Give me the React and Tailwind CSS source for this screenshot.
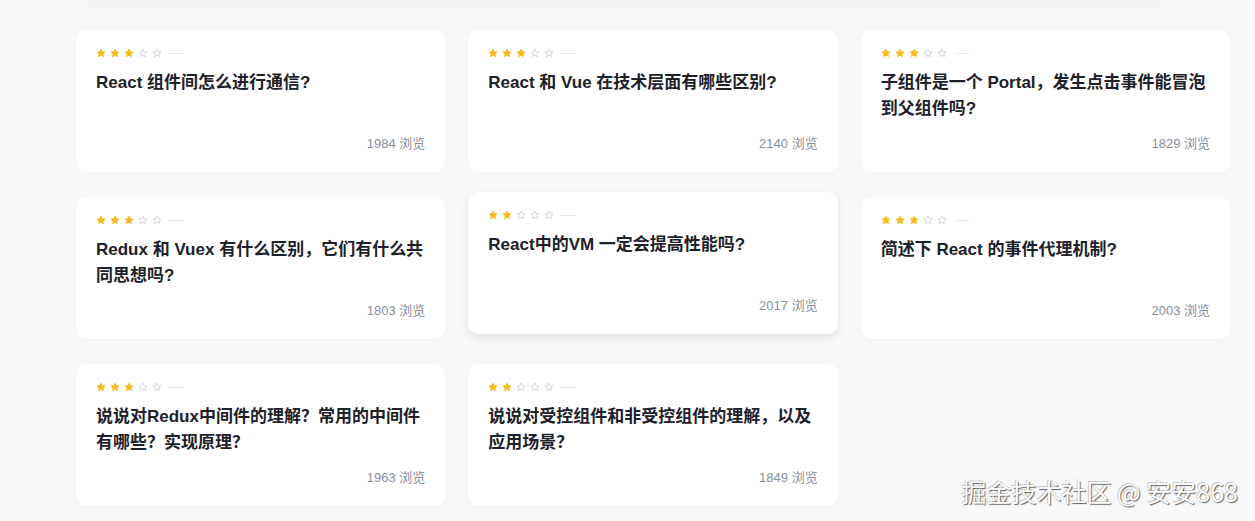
import React from 'react';

const questions = [
    { title: 'React 组件间怎么进行通信?', stars: 3, views: 1984 },
    { title: 'React 和 Vue 在技术层面有哪些区别?', stars: 3, views: 2140 },
    { title: '子组件是一个 Portal，发生点击事件能冒泡到父组件吗?', stars: 3, views: 1829 },
    { title: 'Redux 和 Vuex 有什么区别，它们有什么共同思想吗?', stars: 3, views: 1803 },
    { title: 'React中的VM 一定会提高性能吗?', stars: 2, views: 2017, active: true },
    { title: '简述下 React 的事件代理机制?', stars: 3, views: 2003 },
    { title: '说说对Redux中间件的理解？常用的中间件有哪些？实现原理？', stars: 3, views: 1963 },
    { title: '说说对受控组件和非受控组件的理解，以及应用场景？', stars: 2, views: 1849 },
];

const Star = ({ filled }) => (
    <svg width="10" height="10" viewBox="0 0 24 24" className="shrink-0">
        <path
            d="M12 2.5l2.9 6.2 6.7.8-5 4.6 1.3 6.7L12 17.5l-5.9 3.3 1.3-6.7-5-4.6 6.7-.8z"
            fill={filled ? '#f7ba1e' : 'none'}
            stroke={filled ? '#f7ba1e' : '#c9cdd4'}
            strokeWidth="2"
            strokeLinejoin="round"
        />
    </svg>
);

const QuestionCard = ({ title, stars, views, active }) => (
    <div
        className={
            active
                ? 'flex flex-col h-[142px] bg-white rounded-[10px] px-5 pt-[18px] pb-[18px] -translate-y-[5px] shadow-[0_4px_10px_rgba(0,0,0,0.09)]'
                : 'flex flex-col h-[142px] bg-white rounded-[10px] px-5 pt-[18px] pb-[18px] shadow-[0_1px_3px_rgba(0,0,0,0.02)]'
        }
    >
        <div className="flex items-center gap-[4px] h-[10px]">
            {[0, 1, 2, 3, 4].map((i) => (
                <Star key={i} filled={i < stars} />
            ))}
            <span className="ml-[3px] w-[15px] h-[1px] bg-[#e5e6eb]" />
        </div>
        <h3 className="mt-3 text-[17px] leading-[26px] font-bold text-[#1d2129]">
            {title}
        </h3>
        <div className="mt-auto text-right text-[13px] leading-5 text-[#86909c]">
            {views} 浏览
        </div>
    </div>
);

const App = () => {
    return (
        <main className="relative min-h-screen bg-[#f7f8fa] overflow-hidden font-['Liberation_Sans','Noto_Sans_CJK_SC',sans-serif]">
            <div className="mx-[86px] h-[2px] -mt-[2px] bg-white rounded-b-xl shadow-[0_3px_12px_rgba(0,0,0,0.12)]" />
            <div className="grid grid-cols-3 gap-x-[23px] gap-y-[25px] pl-[76px] pr-[25px] pt-[30px]">
                {questions.map((q) => (
                    <QuestionCard key={q.title} {...q} />
                ))}
            </div>
            <div className="absolute right-[17px] bottom-[15px] text-[25px] leading-[30px] text-white font-['Noto_Sans_CJK_SC',sans-serif] [text-shadow:1px_1px_1px_rgba(0,0,0,0.6),-1px_-1px_0_rgba(0,0,0,0.2)]">
                掘金技术社区 @ 安安868
            </div>
        </main>
    );
};

export default App;
